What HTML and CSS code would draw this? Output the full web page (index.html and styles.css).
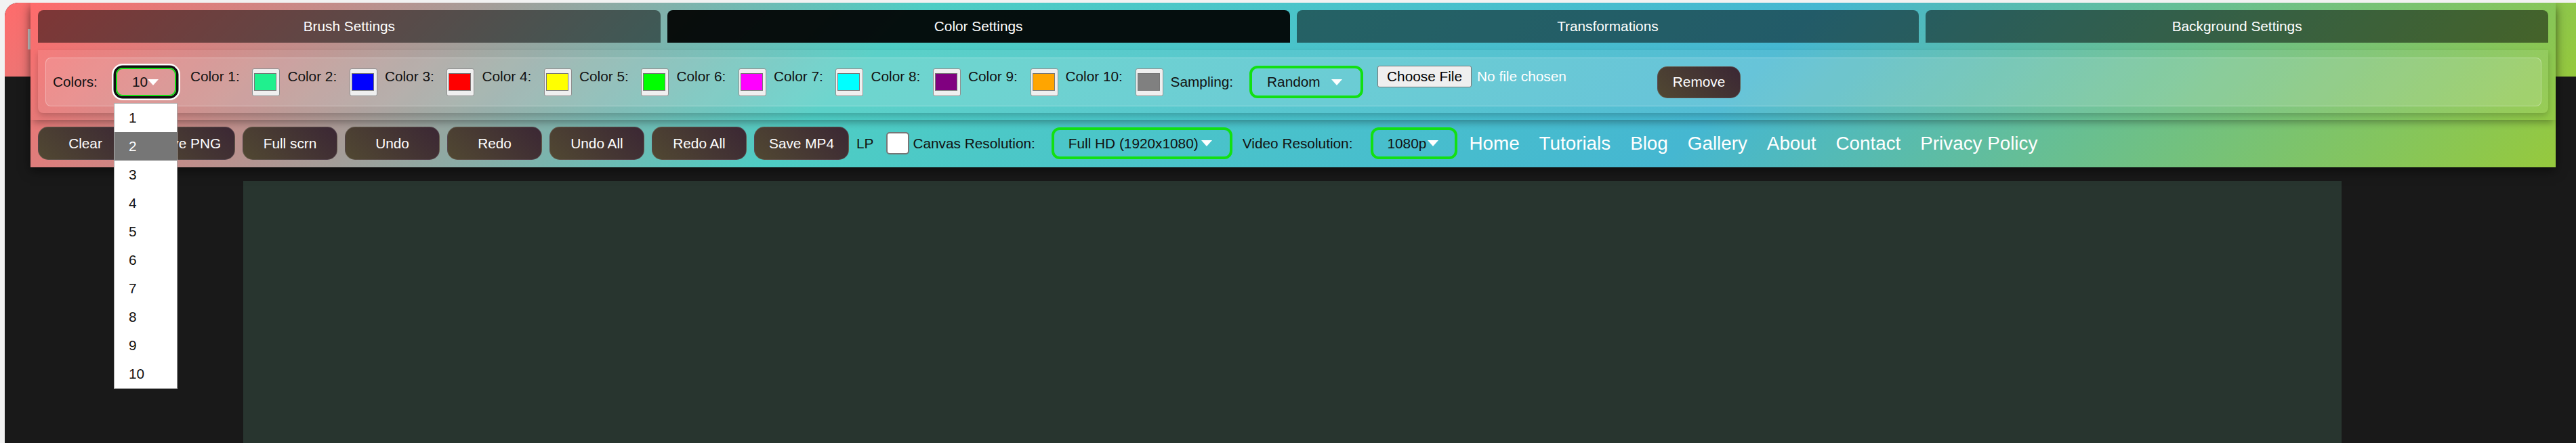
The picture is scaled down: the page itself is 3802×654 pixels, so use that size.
FILE: index.html
```html
<!DOCTYPE html>
<html lang="en">
<head>
<meta charset="utf-8">
<title>Drawing App</title>
<link rel="stylesheet" href="styles.css">
</head>
<body>
<div class="app">
  <header class="hero"><span class="hero-mark"></span></header>
  <main class="stage"><div class="canvas"></div></main>

  <div class="toolbar">
    <div class="toolbar-top">
      <nav class="tabs">
        <button class="tab">Brush Settings</button>
        <button class="tab active">Color Settings</button>
        <button class="tab">Transformations</button>
        <button class="tab">Background Settings</button>
      </nav>
      <section class="tab-panel">
        <div class="panel-box">
          <span class="lbl">Colors:</span>
          <div class="select sel-colors"><span>10</span><i class="caret"></i></div>
          <div class="swatches">
            <div class="cgroup"><span class="lbl">Color 1:</span><span class="swatch"><span class="c1"></span></span></div>
            <div class="cgroup"><span class="lbl">Color 2:</span><span class="swatch"><span class="c2"></span></span></div>
            <div class="cgroup"><span class="lbl">Color 3:</span><span class="swatch"><span class="c3"></span></span></div>
            <div class="cgroup"><span class="lbl">Color 4:</span><span class="swatch"><span class="c4"></span></span></div>
            <div class="cgroup"><span class="lbl">Color 5:</span><span class="swatch"><span class="c5"></span></span></div>
            <div class="cgroup"><span class="lbl">Color 6:</span><span class="swatch"><span class="c6"></span></span></div>
            <div class="cgroup"><span class="lbl">Color 7:</span><span class="swatch"><span class="c7"></span></span></div>
            <div class="cgroup"><span class="lbl">Color 8:</span><span class="swatch"><span class="c8"></span></span></div>
            <div class="cgroup"><span class="lbl">Color 9:</span><span class="swatch"><span class="c9"></span></span></div>
            <div class="cgroup"><span class="lbl">Color 10:</span><span class="swatch"><span class="c10"></span></span></div>
          </div>
          <span class="lbl sampling">Sampling:</span>
          <div class="select sel-sampling"><span>Random</span><i class="caret"></i></div>
          <div class="file">
            <span class="file-btn">Choose File</span><span class="file-name">No file chosen</span>
          </div>
          <button class="btn remove">Remove</button>
        </div>
      </section>
    </div>
    <div class="toolbar-row">
      <div class="actions">
        <button class="btn">Clear</button>
        <button class="btn">Save PNG</button>
        <button class="btn">Full scrn</button>
        <button class="btn">Undo</button>
        <button class="btn">Redo</button>
        <button class="btn">Undo All</button>
        <button class="btn">Redo All</button>
        <button class="btn">Save MP4</button>
      </div>
      <span class="lbl lp">LP</span>
      <span class="check"></span>
      <span class="lbl canvas-lbl">Canvas Resolution:</span>
      <div class="select sel-canvas"><span>Full HD (1920x1080)</span><i class="caret"></i></div>
      <span class="lbl video-lbl">Video Resolution:</span>
      <div class="select sel-video"><span>1080p</span><i class="caret"></i></div>
      <nav class="links">
        <a href="#">Home</a>
        <a href="#">Tutorials</a>
        <a href="#">Blog</a>
        <a href="#">Gallery</a>
        <a href="#">About</a>
        <a href="#">Contact</a>
        <a href="#">Privacy Policy</a>
      </nav>
    </div>
  </div>

  <ul class="dropdown">
    <li>1</li>
    <li class="hl">2</li>
    <li>3</li>
    <li>4</li>
    <li>5</li>
    <li>6</li>
    <li>7</li>
    <li>8</li>
    <li>9</li>
    <li>10</li>
  </ul>
</div>
</body>
</html>
```

FILE: styles.css
```css
* { box-sizing: border-box; }
html, body { margin: 0; height: 100%; }
body {
  background: #f2f2f2;
  padding: 4px 0 0 7px;
  overflow: hidden;
  font-family: "Liberation Sans", Arial, sans-serif;
  font-size: 20.8px;
  color: #111;
}
.app {
  position: relative;
  height: 650px;
  background: #191919;
  border-top-left-radius: 20px;
  overflow: hidden;
}
.hero {
  height: 109px;
  padding: 39px 0 0 34px;
  background: linear-gradient(135deg, #ff6b6b, #4ecdc4, #45b7d1, #96c93d);
}
.hero-mark { display: block; width: 8px; height: 30px; background: #d2d2d2; }
.stage { padding: 154px 0 0 352px; }
.canvas { width: 3097px; height: 400px; background: #28352f; }

.toolbar {
  position: absolute;
  top: 0;
  left: 38px;
  width: 3727px;
  background: linear-gradient(135deg, #ff6b6b, #4ecdc4, #45b7d1, #96c93d);
  box-shadow: 0 5px 15px rgba(0,0,0,.5);
}
.toolbar-top {
  padding: 11px 11px 10px;
  box-shadow: 0 8px 10px -4px rgba(0,0,0,.3);
}
.tabs { display: grid; grid-template-columns: repeat(4, 1fr); gap: 10px; }
.tab {
  height: 48px;
  border: 0;
  border-radius: 8px 8px 0 0;
  background: rgba(0,0,0,.5);
  color: #fff;
  font-family: inherit;
  font-size: 20.8px;
  padding: 0;
}
.tab.active { background: rgba(0,0,0,.93); }
.tab-panel {
  margin-top: 11px;
  padding: 11px 10px 10px 11px;
  background: rgba(255,255,255,.08);
  border-radius: 0 0 8px 8px;
  box-shadow: 0 4px 8px rgba(0,0,0,.18);
}
.panel-box {
  height: 72px;
  display: flex;
  align-items: center;
  padding-left: 10px;
  border: 1px solid rgba(255,255,255,.3);
  border-radius: 8px;
  background: rgba(255,255,255,.12);
}
.lbl { white-space: nowrap; }

.select {
  display: flex;
  align-items: center;
  justify-content: space-between;
  border: 4px solid #12e012;
  border-radius: 12px;
  color: #111;
  white-space: nowrap;
  flex: none;
}
.caret {
  width: 0; height: 0;
  border-left: 8px solid transparent;
  border-right: 8px solid transparent;
  border-top: 9px solid #fff;
}
.sel-colors {
  width: 89px; height: 42px;
  border-width: 2px;
  border-radius: 10px;
  padding: 0 24px 0 22px;
  margin-left: 27px;
  box-shadow: 0 0 0 3.5px #111, 0 0 0 6px #fff;
}
.sel-sampling { width: 168px; height: 48px; padding: 0 27px 0 22px; margin-left: 24px; }
.sel-canvas { width: 267px; height: 47px; padding: 0 26px 0 21px; margin-left: 24px; }
.sel-video { width: 128px; height: 47px; padding: 0 24px 0 20px; margin-left: 27px; }

.swatches { display: flex; gap: 11px; margin-left: 21px; }
.cgroup { display: flex; gap: 18.7px; }
.swatch {
  width: 41px; height: 41px;
  padding: 6px 4px 7px 2px;
  background: #efefef;
  border: 1px solid #8f8f8f;
  border-radius: 3px;
  flex: none;
}
.swatch span { display: block; height: 100%; border: 1px solid #777; }
.c1 { background: #20f08e; }
.c2 { background: #0000ff; }
.c3 { background: #ff0000; }
.c4 { background: #ffff00; }
.c5 { background: #00ff00; }
.c6 { background: #ff00ff; }
.c7 { background: #00ffff; }
.c8 { background: #800080; }
.c9 { background: #ffa500; }
.c10 { background: #808080; }
.sampling { margin-left: 11px; }

.file { display: flex; align-items: flex-start; height: 48px; width: 403px; margin-left: 21px; flex: none; }
.file-btn {
  height: 32px;
  padding: 0 13px;
  display: flex;
  align-items: center;
  background: #efefef;
  border: 1px solid #767676;
  border-radius: 3px;
  color: #000;
  white-space: nowrap;
}
.file-name { color: #fff; margin-left: 8px; line-height: 32px; white-space: nowrap; }

.btn {
  width: 140px; height: 49px;
  border: 1px solid rgba(255,255,255,.12);
  border-radius: 15px;
  background: linear-gradient(45deg, #514832, #3b2734);
  color: #fff;
  font-family: inherit;
  font-size: 20.8px;
  padding: 0;
  flex: none;
}
.remove { width: 123px; height: 47px; margin-left: 10px; }

.toolbar-row { display: flex; align-items: center; padding: 10px 11px 11px; }
.actions { display: flex; gap: 11px; }
.lp { margin-left: 11px; }
.check {
  width: 34px; height: 33px;
  margin-left: 19px;
  background: #fff;
  border: 2px solid #767676;
  border-radius: 5px;
  flex: none;
}
.canvas-lbl { margin-left: 5px; }
.video-lbl { margin-left: 15px; }
.links { display: flex; gap: 29px; margin-left: 17px; }
.links a { color: #fff; text-decoration: none; font-size: 27.8px; white-space: nowrap; }

.dropdown {
  position: absolute;
  left: 161px;
  top: 148px;
  width: 94px;
  margin: 0;
  padding: 0;
  list-style: none;
  background: #fff;
  border: 1px solid #a9a9a9;
  z-index: 5;
}
.dropdown li { height: 42px; line-height: 42px; padding-left: 21px; color: #111; }
.dropdown li.hl { background: #767676; color: #fff; }
```
